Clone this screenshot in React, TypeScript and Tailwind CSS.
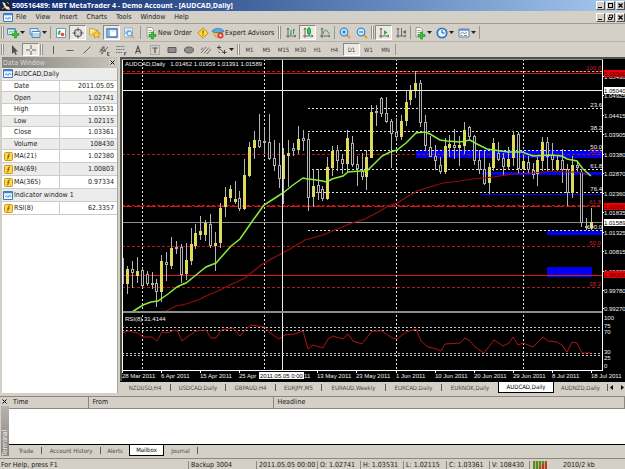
import React from 'react';
import clsx from 'clsx';

type Candle = [high: number, top: number, bottom: number, low: number, bull: 0 | 1];

const CANDLES: Candle[] = [
  [237, 258, 283, 283, 0], [266, 269, 283, 293, 1], [261, 269, 272, 287, 0], [257, 271, 275, 282, 1],
  [268, 270, 285, 287, 0], [271, 274, 283, 285, 0], [272, 283, 284, 288, 0], [279, 283, 291, 306, 0],
  [255, 261, 291, 301, 1], [252, 262, 264, 280, 0], [237, 248, 265, 268, 1], [241, 247, 248, 253, 0],
  [244, 247, 274, 282, 0], [243, 260, 273, 279, 1], [228, 244, 260, 264, 1], [224, 233, 245, 248, 1],
  [216, 231, 234, 239, 1], [220, 223, 234, 240, 1], [214, 224, 245, 247, 0], [232, 243, 245, 270, 1],
  [203, 208, 242, 247, 1], [187, 197, 206, 216, 1], [185, 189, 197, 201, 1], [181, 199, 201, 203, 1],
  [191, 198, 208, 210, 0], [159, 175, 208, 209, 1], [142, 147, 175, 176, 1], [131, 140, 147, 158, 1],
  [114, 140, 146, 147, 0], [129, 141, 142, 153, 0], [114, 142, 158, 159, 0], [140, 158, 165, 170, 0],
  [143, 165, 178, 187, 0], [148, 155, 178, 203, 1], [140, 153, 155, 186, 1], [143, 148, 150, 155, 0],
  [126, 139, 149, 153, 1], [130, 138, 140, 150, 0], [133, 139, 197, 210, 0], [169, 186, 196, 206, 1],
  [169, 185, 192, 199, 0], [186, 189, 198, 200, 0], [157, 167, 198, 199, 1], [146, 151, 167, 175, 1],
  [145, 150, 160, 170, 0], [154, 159, 163, 173, 0], [130, 138, 163, 171, 1], [136, 143, 164, 166, 0],
  [156, 164, 168, 185, 0], [153, 171, 176, 179, 0], [150, 157, 176, 189, 1], [105, 112, 157, 157, 1],
  [105, 111, 112, 125, 0], [97, 98, 113, 116, 0], [97, 113, 121, 122, 0], [119, 121, 133, 167, 0],
  [118, 132, 136, 139, 0], [115, 121, 136, 139, 1], [90, 102, 120, 125, 1], [85, 90, 99, 104, 1],
  [71, 83, 90, 97, 1], [80, 83, 122, 126, 0], [115, 122, 145, 149, 0], [136, 147, 156, 156, 0],
  [145, 156, 160, 169, 0], [157, 165, 171, 173, 0], [138, 146, 171, 173, 1], [135, 144, 147, 156, 1],
  [129, 145, 147, 158, 0], [136, 145, 147, 165, 1], [122, 130, 145, 153, 1], [126, 127, 136, 139, 0],
  [135, 136, 160, 164, 0], [150, 160, 169, 173, 0], [151, 169, 183, 184, 0], [163, 167, 182, 193, 1],
  [138, 143, 167, 170, 1], [142, 153, 159, 160, 0], [153, 158, 166, 175, 0], [147, 159, 166, 169, 1],
  [131, 135, 157, 165, 1], [132, 134, 168, 173, 0], [156, 161, 168, 169, 1], [156, 162, 169, 173, 0],
  [163, 170, 174, 178, 0], [157, 160, 173, 185, 1], [137, 142, 160, 170, 1], [137, 142, 156, 170, 0],
  [143, 155, 159, 170, 0], [155, 160, 169, 170, 1], [149, 160, 169, 182, 0], [164, 169, 192, 205, 0],
  [156, 165, 192, 197, 1], [162, 165, 167, 171, 0], [169, 172, 222, 226, 0], [218, 226, 227, 229, 0],
  [208, 222, 227, 229, 1],
];

const MA_FAST =
  '132,312 143,305 151,302 158,301 168,294 177,287 181,285 186,283 196,275 206,267 216,263 231,246 240,239 251,223 264,205 275,198 283,193 293,185 303,178 308,179 317,180 327,182 332,179 343,176 348,172 360,171 367,171 382,156 390,152 397,150 406,143 416,133 425,132 430,134 440,140 447,141 460,142 470,140 477,144 487,149 508,152 522,152 533,156 550,155 562,156 567,159 577,161 583,169 591,176';
const MA_SLOW =
  '155,312 166,311 176,306 186,304 198,300 206,296 218,291 230,285 245,278 261,265 275,257 290,249 305,240 323,235 337,229 352,223 365,219 380,211 388,206 397,203 417,191 430,187 443,183 460,181 473,179 493,177 513,174 533,173 553,171 567,172 580,172 591,176';
const RSI =
  '122,333 128,331 138,333 143,337 152,337 157,341 162,332 167,333 172,331 177,330 182,341 187,337 196,331 206,330 211,338 216,338 221,330 233,328 240,336 246,329 251,325 265,327 270,333 279,339 285,335 295,334 303,331 308,349 313,345 323,348 328,339 333,336 343,339 348,334 353,341 362,344 372,331 382,331 392,338 397,339 406,332 416,329 421,341 428,347 437,349 441,351 445,344 460,343 465,338 470,341 475,347 484,353 494,340 503,346 509,343 513,337 518,345 523,343 533,347 543,337 548,341 557,342 562,345 567,352 572,342 577,343 582,353 591,353';

const PRICES: [string, number][] = [
  ['1.05430', 76], ['1.04925', 95], ['1.04415', 115], ['1.03905', 134], ['1.03380', 154], ['1.02870', 173], ['1.02360', 193],
  ['1.01835', 212], ['1.01325', 232], ['1.00815', 251], ['1.00280', 271], ['0.99780', 290], ['0.99270', 308],
];

const MARKS: [string, number, string, string][] = [
  ['1.05500', 73, '#f00000', '#300'],
  ['1.05040', 90, '#fff', '#000'],
  ['1.02000', 206, '#f00000', '#300'],
  ['1.01589', 222, '#fff', '#000'],
  ['1.00200', 274, '#f00000', '#300'],
];

const FIBO: [string, number][] = [
  ['23.6', 108], ['38.2', 131], ['50.0', 150], ['61.8', 169], ['76.4', 192], ['100.0', 230],
];
const FIBO_RED: [string, number][] = [
  ['100.0', 71], ['50.0', 154], ['61.8', 205], ['50.0', 246], ['38.2', 287],
];

const DATES: [string, number][] = [
  ['28 Mar 2011', 122], ['6 Apr 2011', 161], ['15 Apr 2011', 200], ['25 Apr', 239], ['13 May 2011', 317],
  ['23 May 2011', 356], ['1 Jun 2011', 396], ['10 Jun 2011', 435], ['20 Jun 2011', 474], ['29 Jun 2011', 513],
  ['8 Jul 2011', 552], ['18 Jul 2011', 591],
];

const PriceChart = () => (
  <svg
    viewBox="122 59 503 322"
    className="block w-full bg-black font-['Liberation_Sans',sans-serif] text-[6px]"
    role="img"
    aria-label="AUDCAD, Daily"
  >
    <g shapeRendering="crispEdges">
      {/* zones */}
      <g fill="#0000f4">
        <rect x="416" y="150" width="186" height="8" />
        <rect x="482" y="172" width="120" height="3" />
        <rect x="480" y="194" width="122" height="1" />
        <rect x="547" y="231" width="55" height="4" />
        <rect x="547" y="267" width="45" height="10" />
      </g>

      {/* levels */}
      <g stroke="#b81414" strokeWidth="1">
        {FIBO_RED.map(([, y]) => (
          <path key={y} d={`M122 ${y}.5H602`} strokeDasharray="3 2" />
        ))}
        <path d="M122 73.5H602" stroke="#d01818" />
        <path d="M122 206.5H602" stroke="#d01818" strokeDasharray="10 2" />
        <path d="M122 275.5H602" stroke="#e01818" />
      </g>
      <path d="M122 222.5H602" stroke="#8e8e8e" />
      <g stroke="#e4e4e4" strokeDasharray="2 2">
        <path d="M308 71.5H602" stroke="#e0a0a0" />
        {FIBO.map(([, y]) => (
          <path key={y} d={`M308 ${y}.5H602`} />
        ))}
        {[327, 330, 353, 355].map((y) => (
          <path key={y} d={`M122 ${y}.5H602`} stroke="#c4c4c4" />
        ))}
        {[142, 264, 396, 523].map((x) => (
          <path key={x} d={`M${x}.5 59V370`} />
        ))}
      </g>

      {/* candles */}
      {CANDLES.map(([high, top, bottom, low, bull], i) => {
        const x = Math.round(122.2 + i * 4.885);
        return (
          <g key={i}>
            <path d={`M${x + 0.5} ${high}V${low + 1}`} stroke="#b4b4b4" />
            <rect
              x={x - 0.5}
              y={top + 0.5}
              width="2"
              height={Math.max(bottom - top, 1)}
              fill={bull ? '#e0dc50' : '#000'}
              stroke={bull ? '#dcd860' : '#b0b0b0'}
            />
          </g>
        );
      })}
    </g>

    <polyline points={MA_SLOW} fill="none" stroke="#960c0c" strokeWidth="1.2" />
    <polyline points={MA_FAST} fill="none" stroke="#86ee40" strokeWidth="1.5" />
    <polyline points={RSI} fill="none" stroke="#b01414" strokeWidth="1" />

    {/* crosshair and frame */}
    <g shapeRendering="crispEdges" stroke="#fff">
      <path d="M122 90.5H602M282.5 59V370" stroke="#eee" />
      <path d="M122 312H602" stroke="#8c8c8c" strokeWidth="2" />
      <path d="M122.5 59V371M122 370.5H603M602.5 59V371" />
      <path d="M122 59.5H603" stroke="#999" />
      {DATES.map(([, x]) => (
        <path key={x} d={`M${x}.5 371V373`} />
      ))}
      {PRICES.map(([, y]) => (
        <path key={y} d={`M603 ${y}.5H604`} />
      ))}
    </g>

    <g fill="#f0f0f0">
      <text x="125" y="66">AUDCAD,Daily&#160;&#160;&#160;1.01462 1.01959 1.01391 1.01589</text>
      <text x="125" y="321">RSI(8) 31.4144</text>
      {FIBO.map(([label, y]) => (
        <text key={y} x="602" y={y - 1} textAnchor="end">{label}</text>
      ))}
      {PRICES.map(([label, y]) => (
        <text key={y} x="604" y={y + 3}>{label}</text>
      ))}
      {[['100', 320], ['75', 328], ['70', 334], ['30', 354], ['25', 360], ['0', 368]].map(([label, y]) => (
        <text key={label} x="604" y={y}>{label}</text>
      ))}
      {DATES.map(([label, x]) => (
        <text key={x} x={x} y="378">{label}</text>
      ))}
      <text x="304" y="378">11</text>
    </g>
    <g fill="#d42020">
      {FIBO_RED.map(([label, y]) => (
        <text key={y} x="601" y={y - 1} textAnchor="end">{label}</text>
      ))}
    </g>
    {MARKS.map(([label, y, bg, fg]) => (
      <g key={y}>
        <rect x="604" y={y - 3} width="21" height="7" fill={bg} />
        <text x="604" y={y + 3} fill={fg}>{label}</text>
      </g>
    ))}
    <rect x="259" y="372" width="45" height="7" fill="#fff" />
    <text x="260" y="378" fill="#000">2011.05.05 0:00</text>
  </svg>
);

/* ---------- icons, all on a 14x14 grid ---------- */

const Icon = ({ children }: { children: React.ReactNode }) => (
  <svg viewBox="0 0 14 14" className="size-[14px] shrink-0" fill="none" aria-hidden="true">
    {children}
  </svg>
);

const Plus = ({ x = 6, y = 5 }) => (
  <path
    d={`M${x + 2.5} ${y}h2v2.5h2.5v2h-2.5v2.5h-2v-2.5h-2.5v-2h2.5z`}
    fill="#2fc832"
    stroke="#178a1c"
    strokeWidth="0.6"
  />
);
const Sheet = () => <path d="M3 1.5h4.5l2 2v7.5h-6.5zM4.5 4.5h3M4.5 6.5h3M4.5 8.5h2" fill="#f8f8f4" stroke="#868a86" strokeWidth="0.8" />;
const Axes = () => <path d="M4 2v10M2 10h10M3 3.5l1-1.5 1 1.5M10.5 9l1.5 1-1.5 1" stroke="#686868" strokeWidth="1" />;
const Lens = () => (
  <>
    <path d="M8.5 8.5l3.5 3.5" stroke="#d9a520" strokeWidth="2" />
    <circle cx="6" cy="6" r="3.8" fill="#cfe9fb" stroke="#3c8fd0" strokeWidth="1.3" />
  </>
);

const ICONS = {
  newChart: (
    <>
      <path d="M1.5 2.5h8v6h-8z" fill="#eaf4fc" stroke="#5c8cac" />
      <path d="M2 3.5h7" stroke="#7eb2dc" />
      <path d="M3 7l1.5-2 1.5 1.5 2-2" stroke="#3a9a50" strokeWidth="0.8" />
      <Plus />
    </>
  ),
  profiles: (
    <>
      <path d="M2 2.5h8v6h-8z" fill="#d6eafa" stroke="#5e8fc0" />
      <path d="M4 5.5h8v6h-8z" fill="#b8d8f2" stroke="#4f86bc" />
      <path d="M4.5 6.5h7" stroke="#fff" />
    </>
  ),
  market: (
    <>
      <path d="M2.5 2.5h9v9h-9z" fill="#fff" stroke="#6c9cc0" />
      <path d="M3.5 6.5l2-2.5 2 2.5z" fill="#28b838" />
      <circle cx="8.5" cy="8.5" r="1.8" fill="#e04a40" />
      <circle cx="5" cy="7.5" r="1.2" fill="#38b048" />
    </>
  ),
  target: (
    <>
      <circle cx="7" cy="7" r="3.5" stroke="#585858" strokeWidth="1.2" />
      <path d="M7 1.5v4M7 8.5v4M1.5 7h4M8.5 7h4" stroke="#585858" />
    </>
  ),
  favorites: (
    <>
      <path d="M1.5 2.5h4l1 1.5h3.5v5h-8.5z" fill="#fbe58a" stroke="#c09a30" strokeWidth="0.8" />
      <path d="M8.5 4.5l1.2 2.5 2.8.3-2 1.9.6 2.8-2.6-1.4-2.5 1.4.5-2.8-2-1.9 2.8-.3z" fill="#ffd43a" stroke="#bb8a12" strokeWidth="0.7" />
    </>
  ),
  panel: (
    <>
      <path d="M2 3h10v8h-10z" fill="#fff" stroke="#3470b8" strokeWidth="1.3" />
      <path d="M2.5 3.5h2.5v7h-2.5z" fill="#7fb4e6" />
      <path d="M6.5 5h4" stroke="#bcd" strokeWidth="0.8" />
    </>
  ),
  tester: (
    <>
      <path d="M2.5 2h8v9h-8z" fill="#edf3f8" stroke="#88a8c4" strokeWidth="0.8" />
      <path d="M4 5v3M6 3.5v3M8 4v3" stroke="#6f9cc4" />
      <path d="M9.5 9.5l2.5 2.5" stroke="#d9a520" strokeWidth="1.6" />
      <circle cx="7.5" cy="7.5" r="2.5" fill="#d4ecfc" stroke="#4b93cc" />
    </>
  ),
  order: (
    <>
      <Sheet />
      <Plus x={5} y={6} />
    </>
  ),
  meta: (
    <>
      <path d="M7 1.8l5.2 5.2-5.2 5.2-5.2-5.2z" fill="#ffd640" stroke="#c88c14" />
      <path d="M7 4.5v3M7 8.5v1.2" stroke="#7a5a10" strokeWidth="1.2" />
    </>
  ),
  expert: (
    <>
      <path d="M2 6h9.5l-1.5 5h-5.5z" fill="#f0c050" stroke="#b88420" strokeWidth="0.6" />
      <path d="M1 5.5c1-3.5 10-4.5 12 0-3 1.5-9 1.5-12 0z" fill="#5caee4" stroke="#2f78b4" strokeWidth="0.8" />
      <circle cx="9.5" cy="9.5" r="3" fill="#e03a28" />
      <rect x="8.5" y="8.5" width="2" height="2" fill="#fff" />
    </>
  ),
  bars: (
    <>
      <Axes />
      <path d="M7 4v5M6 8h1M9.5 3v5M9.5 4h1.5" stroke="#2ca040" />
    </>
  ),
  candles: (
    <>
      <Axes />
      <path d="M8 1v9" stroke="#1d8a30" />
      <rect x="6.5" y="2.5" width="3" height="5.5" rx="1" fill="#2cd048" stroke="#178a2a" strokeWidth="0.8" />
    </>
  ),
  line: (
    <>
      <Axes />
      <path d="M5 8c1-4 3-5 4-3s2 2 3 2.5" stroke="#2ca040" />
    </>
  ),
  zoomIn: (
    <>
      <Lens />
      <path d="M4 6h4M6 4v4" stroke="#2470b0" />
    </>
  ),
  zoomOut: (
    <>
      <Lens />
      <path d="M4 6h4" stroke="#2470b0" />
    </>
  ),
  scroll: (
    <>
      <Axes />
      <path d="M7 4l3.5 2.5-3.5 2.5z" fill="#28b040" />
    </>
  ),
  shift: (
    <>
      <Axes />
      <path d="M7.5 2v8" stroke="#686868" />
      <path d="M12 4l-3.5 2 3.5 2z" fill="#b04848" />
    </>
  ),
  indicators: (
    <>
      <Sheet />
      <Plus x={5} y={6} />
    </>
  ),
  clock: (
    <>
      <circle cx="7" cy="7" r="4.7" fill="#e6f3fd" stroke="#2f78c4" strokeWidth="1.8" />
      <path d="M7 4v3h2.5" stroke="#345" strokeWidth="0.9" />
    </>
  ),
  template: (
    <>
      <path d="M2 3h10v8h-10z" fill="#f4f8fc" stroke="#5c86b0" />
      <path d="M2 4h10" stroke="#4f90d0" strokeWidth="1.5" />
      <path d="M3.5 7.5l2-1 2 1 2.5-1M3.5 9.5h2M7 9.5h3" stroke="#607080" strokeWidth="0.8" />
    </>
  ),
  cursor: <path d="M5 2v9l2-2 1.5 3 1.3-.7-1.5-2.8h2.7z" fill="#505050" />,
  cross: <path d="M7 2v4M7 8v4M2 7h4M8 7h4" stroke="#606060" />,
  vline: <path d="M7.5 3v8" stroke="#606060" />,
  hline: <path d="M3.5 7.5h7" stroke="#606060" />,
  trend: <path d="M3.5 10.5l7-7" stroke="#606060" />,
  channel: (
    <>
      <path d="M2 9.5l6-6M4 11.5l7-7.5M3 6.5l6 2M6 3l2 5M5 4v7" stroke="#606060" strokeWidth="0.9" />
      <path d="M12.5 9.5h-2v3h2M10.5 11h1.5" stroke="#505050" strokeWidth="0.8" />
    </>
  ),
  fibo: (
    <>
      <path d="M2 3.5h9M2 6.5h9M2 9.5h7" stroke="#707070" strokeDasharray="1.5 0.8" />
      <path d="M12.5 9.5h-2v3M10.5 11h1.5" stroke="#505050" strokeWidth="0.8" />
    </>
  ),
  text: <path d="M4.5 10.5l2.5-7 2.5 7M5.5 8.5h3" stroke="#505050" strokeWidth="1.2" />,
  label: (
    <>
      <path d="M2.5 2.5h9v9h-9z" stroke="#808080" strokeDasharray="1 1" />
      <path d="M4.5 5h5M7 5v5" stroke="#505050" strokeWidth="1.2" />
    </>
  ),
  rect: <path d="M3 4.5h8v5h-8z" fill="#8c8c8c" stroke="#5c5c5c" />,
  ellipse: <ellipse cx="7" cy="7" rx="4.5" ry="3" fill="#8c8c8c" stroke="#606060" />,
  hatch: <path d="M2 10l5-6M5 10.5l5-6M8 11l4-5M4 4.5l-2 2.5" stroke="#707070" />,
  arrows: (
    <>
      <path d="M2 4.5h4M4 2.5v4M9.5 7v4M7.500 9.500h4" stroke="#404040" />
      <path d="M5 6l4 3.500M3.500 8.500l1.500 1.500" stroke="#505050" strokeWidth="0.9" />
    </>
  ),
};

type IconName = keyof typeof ICONS;

const Tool = ({ icon, label, pressed, text }: { icon: IconName; label: string; pressed?: boolean; text?: string }) => (
  <button
    type="button"
    aria-label={label}
    aria-pressed={pressed}
    className={clsx(
      'flex h-full shrink-0 items-center justify-center',
      !text && 'w-[17px]',
      pressed && 'border border-[#8c8880] border-r-white border-b-white bg-[#ebe9e4]',
    )}
  >
    <Icon>{ICONS[icon]}</Icon>
    {text && <span className="whitespace-nowrap">{text}</span>}
  </button>
);

const DropTool = ({ icon, label }: { icon: IconName; label: string }) => (
  <button type="button" aria-label={label} className="flex h-full w-[22px] shrink-0 items-center pl-px">
    <Icon>{ICONS[icon]}</Icon>
    <svg viewBox="0 0 5 3" className="h-[3px] w-[5px]" aria-hidden="true">
      <path d="M0 0h5L2.5 3z" fill="#222" />
    </svg>
  </button>
);

const Sep = () => (
  <div className="flex w-[3px] shrink-0 justify-center self-stretch py-px">
    <div className="w-px bg-[#9a968e]" />
  </div>
);

const Grip = () => (
  <div className="flex w-[5px] shrink-0 justify-center self-stretch py-px">
    <div className="w-[3px] border-x border-[#96928a] bg-[#efede8]" />
  </div>
);

const WindowButtons = ({ restore }: { restore?: boolean }) => (
  <div className="ml-auto flex gap-px">
    {['Minimize', restore ? 'Restore' : 'Maximize', 'Close'].map((name) => (
      <button
        key={name}
        type="button"
        aria-label={name}
        className="flex h-[9px] w-[9px] items-center justify-center border border-white border-r-[#505050] border-b-[#505050] bg-[#d4d0c8]"
      >
        <svg viewBox="0 0 7 7" className="size-[7px]" fill="none" stroke="#000" aria-hidden="true">
          {name === 'Minimize' && <path d="M1 5.5h4" />}
          {name === 'Maximize' && <path d="M1 1.5h5M1.5 1v5M5.5 1v5M1 5.5h5" />}
          {name === 'Restore' && <path d="M2.5 2.5v-1.5h3v3h-1M1.5 3.5h3v2h-3z" strokeWidth="0.9" />}
          {name === 'Close' && <path d="M1.5 1.5l4 4M5.5 1.5l-4 4" strokeWidth="1.2" />}
        </svg>
      </button>
    ))}
  </div>
);

const ChartBadge = () => (
  <svg viewBox="0 0 10 9" className="h-[9px] w-[10px] shrink-0" fill="none" aria-hidden="true">
    <path d="M.5.5h9v8h-9z" fill="#eef6fe" stroke="#3c78c0" />
    <path d="M1 1.5h8" stroke="#3f86dc" strokeWidth="1.5" />
    <path d="M2 6l1.5-1.5 1.5 2 1.5-2.5 1.5 2" stroke="#3c78c0" strokeWidth="0.8" />
  </svg>
);

const FunctionBadge = () => (
  <svg viewBox="0 0 9 9" className="size-[9px] shrink-0" fill="none" aria-hidden="true">
    <rect x=".5" y=".5" width="8" height="8" rx="1" fill="#ffd84a" stroke="#c8982a" />
    <path d="M6 2c-1.5-.5-1.5 1-1.7 2.5s-.3 3-1.5 2.5M3.3 4.3h2.2" stroke="#6a4c08" strokeWidth="0.9" />
  </svg>
);

const DATA_ROWS: { name: string; value?: string; kind?: 'chart' | 'fn' }[] = [
  { name: 'AUDCAD,Daily', kind: 'chart' },
  { name: 'Date', value: '2011.05.05' },
  { name: 'Open', value: '1.02741' },
  { name: 'High', value: '1.03531' },
  { name: 'Low', value: '1.02115' },
  { name: 'Close', value: '1.03361' },
  { name: 'Volume', value: '108430' },
  { name: 'MA(21)', value: '1.02380', kind: 'fn' },
  { name: 'MA(69)', value: '1.00803', kind: 'fn' },
  { name: 'MA(365)', value: '0.97334', kind: 'fn' },
  { name: 'Indicator window 1', kind: 'chart' },
  { name: 'RSI(8)', value: '62.3357', kind: 'fn' },
];

const DataWindow = () => (
  <aside className="mb-[3px] flex w-[118px] shrink-0 flex-col pl-[2px]">
    <div className="flex h-[11px] items-center justify-between bg-linear-to-r from-[#86837e] to-[#c8c4bc] pr-[2px] pl-px text-[#dedbd4]">
      Data Window
      <button type="button" aria-label="Close data window" className="flex size-[7px] items-center justify-center bg-[#d4d0c8]">
        <svg viewBox="0 0 5 5" className="size-[5px]" stroke="#000" aria-hidden="true">
          <path d="M.5.5l4 4M4.5.5l-4 4" />
        </svg>
      </button>
    </div>
    <div className="flex-1 border-r border-[#a8a49c] bg-white">
      <table className="h-[147px] w-full table-fixed border-collapse">
        <tbody>
          {DATA_ROWS.map(({ name, value, kind }, i) => (
            <tr key={name} className={clsx('border-b border-[#cfccc6]', i % 2 === 0 && 'bg-[#ececec]')}>
              <th scope="row" colSpan={value ? 1 : 2} className={clsx('p-0 text-left font-normal', value && 'w-[61px]')}>
                <div className="flex items-center">
                  <span className="flex w-[12px] shrink-0 justify-center">
                    {kind === 'chart' && <ChartBadge />}
                    {kind === 'fn' && <FunctionBadge />}
                  </span>
                  {name}
                </div>
              </th>
              {value && <td className="border-l border-[#cfccc6] p-0 pr-[3px] text-right">{value}</td>}
            </tr>
          ))}
        </tbody>
      </table>
    </div>
  </aside>
);

const CHART_TABS = [
  { name: 'NZDUSD,H4', width: 'w-[51px]' },
  { name: 'USDCAD,Daily', width: 'w-[55px]' },
  { name: 'GBPAUD,H4', width: 'w-[50px]' },
  { name: 'EURJPY,M5', width: 'w-[46px]' },
  { name: 'EURAUD,Weekly', width: 'w-[64px]' },
  { name: 'EURCAD,Daily', width: 'w-[56px]' },
  { name: 'EURNOK,Daily', width: 'w-[56px]' },
  { name: 'AUDCAD,Daily', width: 'w-[56px]', active: true },
  { name: 'AUDNZD,Daily', width: 'w-[54px]' },
];

const TERMINAL_TABS = [
  { name: 'Trade', width: 'w-[31px]' },
  { name: 'Account History', width: 'w-[59px]' },
  { name: 'Alerts', width: 'w-[28px]' },
  { name: 'Mailbox', width: 'w-[35px]', active: true },
  { name: 'Journal', width: 'w-[34px]' },
];

const TabStrip = ({ tabs }: { tabs: { name: string; width: string; active?: boolean }[] }) => (
  <div role="tablist" className="flex items-stretch">
    {tabs.map(({ name, width, active }, i) => (
      <button
        key={name}
        type="button"
        role="tab"
        aria-selected={!!active}
        className={clsx(
          'flex h-[11px] shrink-0 items-center justify-center whitespace-nowrap',
          width,
          active ? 'border border-t-0 border-black bg-white text-black' : 'text-[#4c4a46]',
        )}
      >
        <span className="flex-1">{name}</span>
        {!active && !tabs[i + 1]?.active && <span className="h-[7px] w-px bg-[#5c5a56]" />}
      </button>
    ))}
  </div>
);

const Terminal = () => (
  <section className="flex h-[62px] shrink-0 border-t border-[#8c8880]">
    <div className="flex w-[9px] shrink-0 flex-col items-center justify-between pt-[2px] pb-[2px]">
      <button type="button" aria-label="Close terminal" className="flex size-[5px]">
        <svg viewBox="0 0 5 5" className="size-[5px]" stroke="#000" aria-hidden="true">
          <path d="M.5.5l4 4M4.5.5l-4 4" />
        </svg>
      </button>
      <div className="flex h-[50px] w-[8px] rotate-180 items-center justify-start bg-linear-to-t from-[#b8b4ac] to-[#86837e] text-[#f0eee8] [writing-mode:vertical-rl]">
        Terminal
      </div>
    </div>
    <div className="flex min-w-0 flex-1 flex-col">
      <div className="flex-1 border-b border-black bg-white">
        <table className="w-full table-fixed border-collapse bg-[#d4d0c8]">
          <thead>
            <tr className="h-[11px] border-b border-[#8c8880] text-left">
              <th className="w-[79px] border-r border-[#8c8880] p-0 pl-1 font-normal">Time</th>
              <th className="w-[185px] border-r border-[#8c8880] p-0 pl-1 font-normal">From</th>
              <th className="border-r border-[#8c8880] p-0 pl-1 font-normal">Headline</th>
            </tr>
          </thead>
        </table>
      </div>
      <div className="h-[13px] pl-[2px] text-[6px]">
        <TabStrip tabs={TERMINAL_TABS} />
      </div>
    </div>
  </section>
);

const STATUS = [
  { text: 'Backup 3004', width: 'w-[68px]' },
  { text: '2011.05.05 00:00', width: 'w-[61px]' },
  { text: 'O: 1.02741', width: 'w-[43px]' },
  { text: 'H: 1.03531', width: 'w-[43px]' },
  { text: 'L: 1.02115', width: 'w-[43px]' },
  { text: 'C: 1.03361', width: 'w-[43px]' },
  { text: 'V: 108430', width: 'w-[40px]' },
];

const MENU = ['File', 'View', 'Insert', 'Charts', 'Tools', 'Window', 'Help'];
const FRAMES = ['M1', 'M5', 'M15', 'M30', 'H1', 'H4', 'D1', 'W1', 'MN'];

export default function App() {
  return (
    <div className="flex h-screen flex-col overflow-hidden bg-[#d4d0c8] font-['DejaVu_Sans_Condensed','Liberation_Sans',sans-serif] text-[7px] leading-[8px] text-[#1a1a1a]">
      <header className="flex h-[11px] shrink-0 items-center bg-linear-to-r from-[#0a246a] to-[#a6caf0] pl-px">
        <svg viewBox="0 0 10 10" className="mr-px size-[10px]" fill="none" aria-hidden="true">
          <path d="M0 0h10v10h-10z" fill="#20242c" />
          <path d="M1 1l3 1 1 3 3 1 1 3-4-1-2-3z" fill="#e8e8e8" />
          <path d="M1 8l3-2M6 1l2 2" stroke="#c8a850" />
        </svg>
        <h1 className="font-['Open_Sans','Liberation_Sans',sans-serif] font-bold whitespace-nowrap text-white">
          500516489: MBT MetaTrader 4 - Demo Account - [AUDCAD,Daily]
        </h1>
        <WindowButtons />
      </header>

      <nav className="flex h-[13px] shrink-0 items-center border-b border-[#a09c94] pl-[3px]">
        <ChartBadge />
        <div className="ml-[3px] flex gap-[9px]">
          {MENU.map((item) => (
            <button key={item} type="button">{item}</button>
          ))}
        </div>
        <WindowButtons restore />
      </nav>

      <div className="flex h-[17px] shrink-0 items-center py-px">
        <Grip />
        <DropTool icon="newChart" label="New chart" />
        <DropTool icon="profiles" label="Profiles" />
        <Sep />
        <Tool icon="market" label="Market watch" />
        <Tool icon="target" label="Data window" pressed />
        <Tool icon="favorites" label="Navigator" />
        <Tool icon="panel" label="Terminal" pressed />
        <Tool icon="tester" label="Strategy tester" />
        <div className="flex w-[7px] shrink-0 justify-center self-stretch">
          <Sep />
        </div>
        <div className="flex h-full w-[50px] shrink-0">
          <Tool icon="order" label="New Order" text="New Order" />
        </div>
        <Tool icon="meta" label="MetaEditor" />
        <div className="flex h-full w-[66px] shrink-0">
          <Tool icon="expert" label="Expert Advisors" text="Expert Advisors" />
        </div>
        <Grip />
        <Tool icon="bars" label="Bar chart" />
        <Tool icon="candles" label="Candlesticks" pressed />
        <Tool icon="line" label="Line chart" />
        <Sep />
        <Tool icon="zoomIn" label="Zoom in" />
        <Tool icon="zoomOut" label="Zoom out" />
        <Grip />
        <Tool icon="scroll" label="Auto scroll" pressed />
        <Tool icon="shift" label="Chart shift" />
        <Sep />
        <DropTool icon="indicators" label="Indicators" />
        <DropTool icon="clock" label="Periods" />
        <DropTool icon="template" label="Templates" />
        <Sep />
      </div>

      <div className="flex h-4 shrink-0 items-center border-t border-[#b4b0a8] py-px">
        <Grip />
        <Tool icon="cursor" label="Cursor" />
        <Tool icon="cross" label="Crosshair" pressed />
        <Grip />
        <Tool icon="vline" label="Vertical line" />
        <Tool icon="hline" label="Horizontal line" />
        <Tool icon="trend" label="Trendline" />
        <Tool icon="channel" label="Equidistant channel" />
        <Tool icon="fibo" label="Fibonacci retracement" />
        <Tool icon="text" label="Text" />
        <Tool icon="label" label="Text label" />
        <Tool icon="rect" label="Rectangle" />
        <Tool icon="ellipse" label="Ellipse" />
        <Tool icon="hatch" label="Lines" />
        <DropTool icon="arrows" label="Arrows" />
        <Grip />
        {FRAMES.map((frame) => (
          <button
            key={frame}
            type="button"
            aria-pressed={frame === 'D1'}
            className={clsx(
              'h-full w-[17px] shrink-0 text-center text-[6px] text-[#3c3c3c]',
              frame === 'D1' && 'border border-[#8c8880] border-r-white border-b-white bg-[#ebe9e4]',
            )}
          >
            {frame}
          </button>
        ))}
        <Sep />
      </div>

      <main className="flex min-h-0 flex-1">
        <DataWindow />
        <section className="ml-[2px] flex min-w-0 flex-1 flex-col">
          <div className="border-t-2 border-l-2 border-[#50524c]">
            <PriceChart />
          </div>
          <div className="flex h-[13px] items-start justify-between border-t border-black text-[6px]">
            <TabStrip tabs={CHART_TABS} />
            <div className="flex h-[11px] items-center gap-[8px] pr-px">
              <button type="button" aria-label="Previous tabs">
                <svg viewBox="0 0 3 5" className="h-[5px] w-[3px]" aria-hidden="true"><path d="M3 0v5L0 2.5z" /></svg>
              </button>
              <button type="button" aria-label="Next tabs">
                <svg viewBox="0 0 3 5" className="h-[5px] w-[3px]" aria-hidden="true"><path d="M0 0v5l3-2.5z" /></svg>
              </button>
            </div>
          </div>
        </section>
      </main>

      <Terminal />

      <footer className="flex h-[11px] shrink-0 items-start overflow-hidden border-t border-[#8c8880] pt-[2px] whitespace-nowrap">
        <span className="min-w-0 flex-1 pl-px">For Help, press F1</span>
        {STATUS.map(({ text, width }) => (
          <span key={text} className={clsx('shrink-0 border-l border-[#8c8880] pl-[2px]', width)}>{text}</span>
        ))}
        <span className="flex w-[96px] shrink-0 gap-[16px] border-l border-[#8c8880] pl-[3px]">
          <svg viewBox="0 0 14 8" className="h-[8px] w-[14px]" aria-hidden="true">
            <path d="M0 0h14v8h-14z" fill="#5c8a28" />
            <path d="M14 0v8h-9z" fill="#c03828" />
            <path d="M2.5 0v8M5.5 0v8M8.5 0v8M11.5 0v8" stroke="#c4c890" strokeWidth="0.8" />
          </svg>
          2010/2 kb
        </span>
      </footer>
    </div>
  );
}
